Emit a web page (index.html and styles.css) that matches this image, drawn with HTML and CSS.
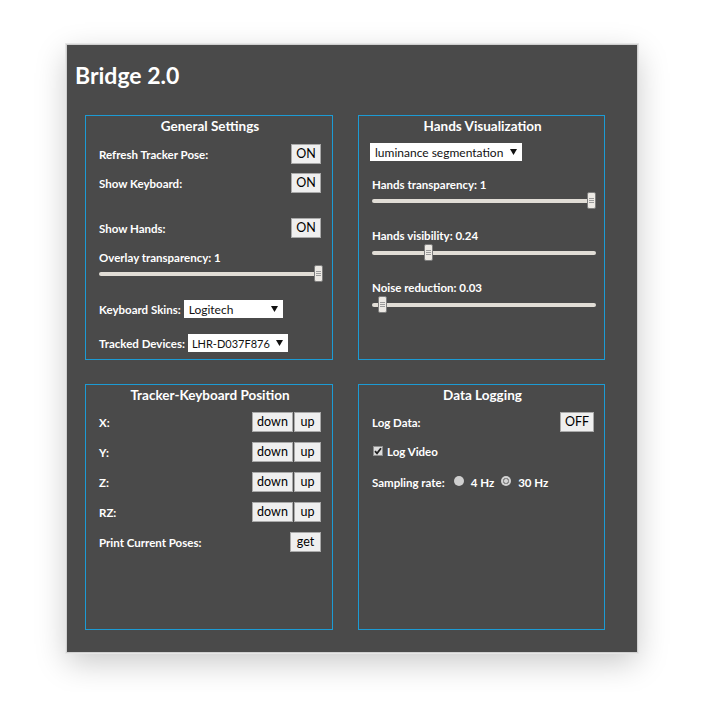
FILE: index.html
```html
<!DOCTYPE html>
<html>
<head>
<meta charset="utf-8">
<title>Bridge 2.0</title>
<link rel="stylesheet" href="styles.css">
</head>
<body>
<div class="card">
  <h1 class="title">Bridge 2.0</h1>
  <div class="grid">
    <section class="panel">
      <h2 class="panel-title">General Settings</h2>
      <div class="row mt8"><span class="label">Refresh Tracker Pose:</span><button class="btn btn-on">ON</button></div>
      <div class="row mt9"><span class="label">Show Keyboard:</span><button class="btn btn-on">ON</button></div>
      <div class="row mt25"><span class="label">Show Hands:</span><button class="btn btn-on">ON</button></div>
      <div class="label line mt14">Overlay transparency: 1</div>
      <input class="slider mt1" type="range" min="0" max="1" step="0.01" value="1">
      <div class="srow mt18"><span class="label">Keyboard Skins:</span><div class="select sel-skin"><span>Logitech</span><svg class="caret" width="7" height="6" viewBox="0 0 7 6"><path d="M0 0H7L3.5 6Z"/></svg></div></div>
      <div class="srow mt16"><span class="label">Tracked Devices:</span><div class="select sel-dev"><span>LHR-D037F876</span><svg class="caret" width="7" height="6" viewBox="0 0 7 6"><path d="M0 0H7L3.5 6Z"/></svg></div></div>
    </section>

    <section class="panel">
      <h2 class="panel-title">Hands Visualization</h2>
      <div class="select sel-mode mt7"><span>luminance segmentation</span><svg class="caret" width="7" height="6" viewBox="0 0 7 6"><path d="M0 0H7L3.5 6Z"/></svg></div>
      <div class="label line mt18">Hands transparency: 1</div>
      <input class="slider mt1" type="range" min="0" max="1" step="0.01" value="1">
      <div class="label line mt21">Hands visibility: 0.24</div>
      <input class="slider mt2" type="range" min="0" max="1" step="0.01" value="0.24">
      <div class="label line mt21">Noise reduction: 0.03</div>
      <input class="slider mt2" type="range" min="0" max="1" step="0.01" value="0.03">
    </section>

    <section class="panel">
      <h2 class="panel-title">Tracker-Keyboard Position</h2>
      <div class="row mt7"><span class="label">X:</span><div class="btn-group"><button class="btn btn-down">down</button><button class="btn btn-up">up</button></div></div>
      <div class="row mt10"><span class="label">Y:</span><div class="btn-group"><button class="btn btn-down">down</button><button class="btn btn-up">up</button></div></div>
      <div class="row mt10"><span class="label">Z:</span><div class="btn-group"><button class="btn btn-down">down</button><button class="btn btn-up">up</button></div></div>
      <div class="row mt10"><span class="label">RZ:</span><div class="btn-group"><button class="btn btn-down">down</button><button class="btn btn-up">up</button></div></div>
      <div class="row mt10"><span class="label">Print Current Poses:</span><button class="btn btn-get">get</button></div>
    </section>

    <section class="panel">
      <h2 class="panel-title">Data Logging</h2>
      <div class="row mt7"><span class="label">Log Data:</span><button class="btn btn-off">OFF</button></div>
      <div class="check-row mt12"><span class="checkbox"><svg width="8" height="8" viewBox="0 0 8 8"><path d="M1 4.2L3 6.4L7 1.2" fill="none" stroke="#222" stroke-width="1.8"/></svg></span><span class="label">Log Video</span></div>
      <div class="radio-row mt17"><span class="label">Sampling rate:</span><span class="radio"></span><span class="label">4 Hz</span><span class="radio radio-on"></span><span class="label">30 Hz</span></div>
    </section>
  </div>
</div>
</body>
</html>
```

FILE: styles.css
```css
* { box-sizing: border-box; }

html, body {
  margin: 0;
  background: #ffffff;
}

body {
  padding: 45px 0 40px 67px;
  font-family: "Lato", "Liberation Sans", sans-serif;
}

.card {
  width: 570px;
  height: 607px;
  background: #4a4a4a;
  box-shadow: 0 0 0 1px #d0d0d0, 0 0 0 2px #e6e6e6, 0 10px 30px rgba(0, 0, 0, 0.22);
  padding: 16px 32px 0 18px;
  color: #ffffff;
}

.title {
  margin: 0 0 0 -10px;
  font-size: 23px;
  line-height: 28px;
  font-weight: 700;
  color: #ffffff;
}

.grid {
  margin-top: 26px;
  display: grid;
  grid-template-columns: 248px 247px;
  grid-template-rows: 245px 246px;
  column-gap: 25px;
  row-gap: 24px;
}

.panel {
  border: 1px solid #1c9bd4;
  padding: 0 11px 0 13px;
}

.panel-title {
  margin: 0;
  height: 20px;
  line-height: 20px;
  text-align: center;
  font-size: 13.5px;
  font-weight: 700;
  color: #ffffff;
}

.label {
  font-size: 11.5px;
  font-weight: 700;
  color: #ffffff;
  white-space: nowrap;
}

.line {
  display: block;
  line-height: 12px;
  height: 12px;
}

.row {
  display: flex;
  justify-content: space-between;
  align-items: center;
  height: 20px;
}

.srow {
  display: flex;
  align-items: center;
  height: 18px;
  gap: 3px;
}

.btn {
  height: 20px;
  padding: 0;
  margin: 0;
  font-family: "Lato", "Liberation Sans", sans-serif;
  font-size: 12.5px;
  font-weight: 400;
  color: #000000;
  background: #efefef;
  border: 1px solid #a9a9a9;
  border-radius: 0;
  line-height: 18px;
  text-align: center;
}

.btn-on { width: 30px; }
.btn-off { width: 34px; margin-right: -1px; }
.btn-get { width: 31px; }
.btn-down { width: 41px; }
.btn-up { width: 27px; }

.btn-group {
  display: flex;
  gap: 1px;
}

.select {
  display: flex;
  align-items: center;
  justify-content: space-between;
  height: 18px;
  background: #ffffff;
  color: #111111;
  font-size: 12px;
  padding: 0 5px 0 5px;
  white-space: nowrap;
}

.sel-skin { width: 99px; }
.sel-dev { width: 100px; font-size: 11px; padding-left: 4px; }
.sel-mode { width: 152px; margin-left: -2px; }

.caret {
  fill: #111111;
  flex: none;
  margin-top: -1px;
}

.slider {
  display: block;
  -webkit-appearance: none;
  appearance: none;
  width: 224px;
  height: 17px;
  margin-left: 0;
  margin-right: 0;
  margin-bottom: 0;
  padding: 0;
  background: transparent;
}

.slider::-webkit-slider-runnable-track {
  height: 4px;
  background: #e1ddd6;
  border-radius: 2px;
}

.slider::-webkit-slider-thumb {
  -webkit-appearance: none;
  appearance: none;
  width: 9px;
  height: 17px;
  margin-top: -6.5px;
  border: 1px solid #7d7d7d;
  border-radius: 2px;
  background:
    linear-gradient(#9b9b9b, #9b9b9b) 50% 5px / 5px 1px no-repeat,
    linear-gradient(#9b9b9b, #9b9b9b) 50% 7px / 5px 1px no-repeat,
    linear-gradient(#9b9b9b, #9b9b9b) 50% 9px / 5px 1px no-repeat,
    #ece9e4;
}

.check-row {
  display: flex;
  align-items: center;
  height: 14px;
  gap: 4px;
}

.checkbox {
  width: 10px;
  height: 10px;
  margin-left: 1px;
  background: #dcdcdc;
  border: 1px solid #8f8f8f;
  display: flex;
  align-items: center;
  justify-content: center;
}

.radio-row {
  display: flex;
  align-items: center;
  height: 14px;
}

.radio {
  width: 10px;
  height: 10px;
  border-radius: 50%;
  background: #cfcfcf;
  margin: -2px 7px 0 9px;
  flex: none;
}

.radio-on {
  margin-left: 7px;
  background: radial-gradient(circle, #d6d6d6 0 1.5px, #8a8a8a 2.2px 3px, #d2d2d2 3.5px);
}

.mt1 { margin-top: 1px; }
.mt2 { margin-top: 2px; }
.mt7 { margin-top: 7px; }
.mt8 { margin-top: 8px; }
.mt9 { margin-top: 9px; }
.mt10 { margin-top: 10px; }
.mt12 { margin-top: 12px; }
.mt14 { margin-top: 14px; }
.mt16 { margin-top: 16px; }
.mt17 { margin-top: 17px; }
.mt18 { margin-top: 18px; }
.mt21 { margin-top: 21px; }
.mt25 { margin-top: 25px; }
```
